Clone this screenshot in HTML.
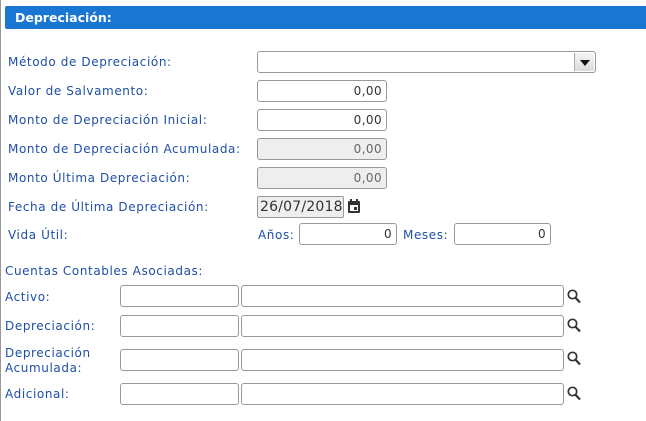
<!DOCTYPE html>
<html><head><meta charset="utf-8"><style>
body{margin:0;width:646px;height:421px;background:#fff;position:relative;overflow:hidden;font-family:"DejaVu Sans",Verdana,sans-serif;font-size:12px;color:#1f4fa6}
.bl{position:absolute;left:0;top:0;width:1px;height:421px;background:#999}
.hd{position:absolute;left:5px;top:6px;width:641px;height:23px;background:#1976d2;border-radius:2px 0 0 2px;color:#fff;font-weight:bold;font-size:12.5px;line-height:23px;padding-left:10px;box-sizing:border-box}
.l{position:absolute;white-space:nowrap;line-height:15px;letter-spacing:0.6px}
.i{position:absolute;box-sizing:border-box;border:1px solid #999;border-radius:3px;background:#fff;height:22px;text-align:right;padding-right:4px;line-height:20px;color:#333;font-size:12px;letter-spacing:0.4px}
.d{background:#eee;color:#666}
.s{position:absolute;width:14px;height:15px}
</style></head><body>
<div class="bl"></div>
<div class="hd">Depreciación:</div>
<div class="l" style="left:8px;top:55px">Método de Depreciación:</div>
<div class="l" style="left:8px;top:84px">Valor de Salvamento:</div>
<div class="l" style="left:8px;top:113px">Monto de Depreciación Inicial:</div>
<div class="l" style="left:8px;top:142px">Monto de Depreciación Acumulada:</div>
<div class="l" style="left:8px;top:171px">Monto Última Depreciación:</div>
<div class="l" style="left:8px;top:200px">Fecha de Última Depreciación:</div>
<div class="l" style="left:8px;top:228px">Vida Útil:</div>
<div class="i" style="left:257px;top:51px;width:339px;height:22px"><div style="position:absolute;right:1px;top:1px;width:19px;height:18px;background:linear-gradient(#f4f4f4,#ddd);border-left:1px solid #aaa"><div style="position:absolute;left:5px;top:7px;border-left:5px solid transparent;border-right:5px solid transparent;border-top:6px solid #111"></div></div></div>
<div class="i" style="left:257px;top:80px;width:130px">0,00</div>
<div class="i" style="left:257px;top:109px;width:130px">0,00</div>
<div class="i d" style="left:257px;top:138px;width:130px">0,00</div>
<div class="i d" style="left:257px;top:167px;width:130px">0,00</div>
<div class="i d" style="left:257px;top:196px;width:87px;height:22px;text-align:left;padding-left:2px;color:#333;font-size:14px;letter-spacing:0.2px;border-radius:2px;overflow:hidden">26/07/2018</div>
<svg style="position:absolute;left:347px;top:199px" width="14" height="15" viewBox="0 0 14 15"><rect x="1" y="2" width="12" height="12" rx="1" fill="#333"/><rect x="3" y="6" width="8" height="6" fill="#fff"/><rect x="7" y="8" width="3" height="3" fill="#333"/><rect x="3" y="0" width="2" height="3" fill="#333"/><rect x="9" y="0" width="2" height="3" fill="#333"/></svg>
<div class="l" style="left:258px;top:228px">Años:</div>
<div class="i" style="left:299px;top:223px;width:98px">0</div>
<div class="l" style="left:403px;top:228px">Meses:</div>
<div class="i" style="left:454px;top:223px;width:97px">0</div>
<div class="l" style="left:5px;top:264px">Cuentas Contables Asociadas:</div>
<div class="l" style="left:5px;top:290px">Activo:</div>
<div class="l" style="left:5px;top:319px">Depreciación:</div>
<div class="l" style="left:5px;top:346px">Depreciación<br>Acumulada:</div>
<div class="l" style="left:5px;top:387px">Adicional:</div>
<div class="i" style="left:120px;top:285px;width:119px"></div><div class="i" style="left:241px;top:285px;width:323px"></div>
<div class="i" style="left:120px;top:315px;width:119px"></div><div class="i" style="left:241px;top:315px;width:323px"></div>
<div class="i" style="left:120px;top:349px;width:119px"></div><div class="i" style="left:241px;top:349px;width:323px"></div>
<div class="i" style="left:120px;top:383px;width:119px"></div><div class="i" style="left:241px;top:383px;width:323px"></div>
<svg class="s" style="left:567px;top:289px" viewBox="0 0 14 15"><circle cx="5.5" cy="5.5" r="4.2" fill="none" stroke="#333" stroke-width="1.7"/><path d="M8.5 8.8L13 13.5" stroke="#333" stroke-width="2.2"/></svg>
<svg class="s" style="left:567px;top:318px" viewBox="0 0 14 15"><circle cx="5.5" cy="5.5" r="4.2" fill="none" stroke="#333" stroke-width="1.7"/><path d="M8.5 8.8L13 13.5" stroke="#333" stroke-width="2.2"/></svg>
<svg class="s" style="left:567px;top:351px" viewBox="0 0 14 15"><circle cx="5.5" cy="5.5" r="4.2" fill="none" stroke="#333" stroke-width="1.7"/><path d="M8.5 8.8L13 13.5" stroke="#333" stroke-width="2.2"/></svg>
<svg class="s" style="left:567px;top:386px" viewBox="0 0 14 15"><circle cx="5.5" cy="5.5" r="4.2" fill="none" stroke="#333" stroke-width="1.7"/><path d="M8.5 8.8L13 13.5" stroke="#333" stroke-width="2.2"/></svg>
</body></html>
